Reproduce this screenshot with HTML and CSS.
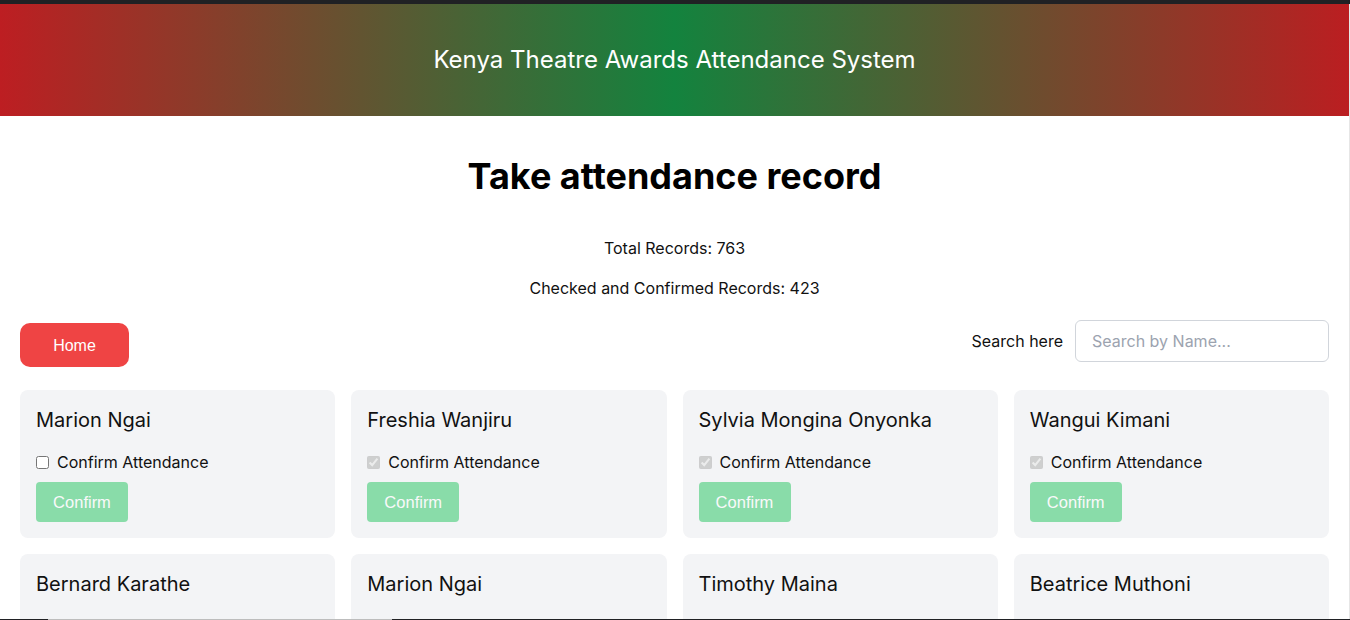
FILE: index.html
```html
<!DOCTYPE html>
<html lang="en">
<head>
<meta charset="utf-8">
<title>Kenya Theatre Awards Attendance System</title>
<link rel="stylesheet" href="styles.css">
</head>
<body>
<div class="topbar"></div>
<div class="page">
<header class="hero">
  <h2 class="hero-title">Kenya Theatre Awards Attendance System</h2>
</header>
<main class="content">
  <h1 class="page-title">Take attendance record</h1>
  <p class="stat">Total Records: 763</p>
  <p class="stat">Checked and Confirmed Records: 423</p>
  <div class="toolbar">
    <button class="home-btn">Home</button>
    <div class="search">
      <label class="search-label" for="q">Search here</label>
      <input id="q" class="search-input" type="text" placeholder="Search by Name...">
    </div>
  </div>
  <div class="grid">
    <div class="card">
      <div class="name">Marion Ngai</div>
      <label class="check"><input type="checkbox"> Confirm Attendance</label>
      <button class="confirm" disabled>Confirm</button>
    </div>
    <div class="card">
      <div class="name">Freshia Wanjiru</div>
      <label class="check"><input type="checkbox" checked disabled> Confirm Attendance</label>
      <button class="confirm" disabled>Confirm</button>
    </div>
    <div class="card">
      <div class="name">Sylvia Mongina Onyonka</div>
      <label class="check"><input type="checkbox" checked disabled> Confirm Attendance</label>
      <button class="confirm" disabled>Confirm</button>
    </div>
    <div class="card">
      <div class="name">Wangui Kimani</div>
      <label class="check"><input type="checkbox" checked disabled> Confirm Attendance</label>
      <button class="confirm" disabled>Confirm</button>
    </div>
    <div class="card">
      <div class="name">Bernard Karathe</div>
      <label class="check"><input type="checkbox" checked disabled> Confirm Attendance</label>
      <button class="confirm" disabled>Confirm</button>
    </div>
    <div class="card">
      <div class="name">Marion Ngai</div>
      <label class="check"><input type="checkbox" checked disabled> Confirm Attendance</label>
      <button class="confirm" disabled>Confirm</button>
    </div>
    <div class="card">
      <div class="name">Timothy Maina</div>
      <label class="check"><input type="checkbox" checked disabled> Confirm Attendance</label>
      <button class="confirm" disabled>Confirm</button>
    </div>
    <div class="card">
      <div class="name">Beatrice Muthoni</div>
      <label class="check"><input type="checkbox" checked disabled> Confirm Attendance</label>
      <button class="confirm" disabled>Confirm</button>
    </div>
  </div>
</main>
</div>
<div class="right-edge"></div>
<div class="bottom-edge"><span class="bottom-thumb"></span></div>
</body>
</html>
```
FILE: styles.css
```css
* { box-sizing: border-box; }
html, body { margin: 0; padding: 0; }
body {
  font-family: Inter, "Liberation Sans", sans-serif;
  color: #111;
  background: #fff;
  overflow: hidden;
}
.topbar {
  height: 4px;
  background: #202124;
}
.page {
  margin-right: 1px;
}
.hero {
  height: 112px;
  display: flex;
  align-items: center;
  justify-content: center;
  background: linear-gradient(to right, #bd1e22 0%, #13833e 50%, #bb1e21 100%);
}
.hero-title {
  margin: 0;
  color: #fff;
  font-weight: 400;
  font-size: 24px;
  line-height: 32px;
}
.content {
  padding: 40px 20px 0;
}
.page-title {
  margin: 0 0 40px;
  text-align: center;
  font-size: 36px;
  line-height: 40px;
  font-weight: 700;
  color: #000;
}
.stat {
  margin: 0 0 16px;
  text-align: center;
  font-size: 16px;
  line-height: 24px;
  color: #111;
}
.toolbar {
  display: flex;
  justify-content: space-between;
  align-items: flex-start;
  margin-top: 20px;
  margin-bottom: 23px;
}
.home-btn {
  margin-top: 3px;
  border: none;
  background: #ef4444;
  color: #fff;
  font-family: "Liberation Sans", Arial, sans-serif;
  font-size: 16px;
  line-height: 24px;
  padding: 11px 0 9px;
  border-radius: 10px;
  width: 109px;
}
.search {
  display: flex;
  align-items: center;
  gap: 12px;
}
.search-label {
  font-size: 16px;
  color: #111;
}
.search-input {
  width: 254px;
  height: 42px;
  border: 1px solid #d1d5db;
  border-radius: 6px;
  padding: 0 16px;
  font-family: Inter, "Liberation Sans", sans-serif;
  font-size: 16px;
  color: #111;
}
.search-input::placeholder { color: #9ca3af; }
.grid {
  display: grid;
  grid-template-columns: repeat(4, 1fr);
  gap: 16px;
}
.card {
  background: #f3f4f6;
  border-radius: 8px;
  padding: 16px;
  display: flex;
  flex-direction: column;
  align-items: flex-start;
}
.name {
  font-size: 20px;
  line-height: 28px;
  color: #111;
}
.check {
  display: flex;
  align-items: center;
  gap: 8px;
  margin-top: 16px;
  font-size: 16px;
  line-height: 24px;
  color: #111;
}
.check input {
  margin: 0;
  width: 13px;
  height: 13px;
}
.confirm {
  margin-top: 8px;
  border: none;
  background: #22c55e;
  opacity: 0.5;
  color: #fff;
  font-family: "Liberation Sans", Arial, sans-serif;
  font-size: 16.5px;
  line-height: 24px;
  padding: 8px 0;
  width: 92px;
  border-radius: 4px;
}
.right-edge {
  position: fixed;
  top: 4px;
  right: 0;
  bottom: 0;
  width: 1px;
  background: #e6e6e6;
}
.bottom-edge {
  position: fixed;
  left: 0;
  right: 0;
  bottom: 0;
  height: 1px;
  background: #202124;
}
.bottom-thumb {
  position: absolute;
  left: 48px;
  width: 344px;
  top: 0;
  height: 1px;
  background: #bdbdbd;
}
```
